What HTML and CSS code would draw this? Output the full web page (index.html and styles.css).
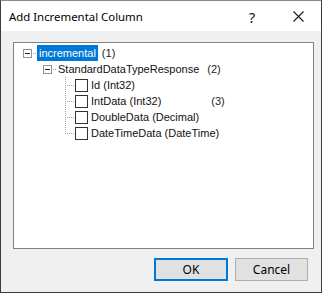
FILE: index.html
```html
<!DOCTYPE html>
<html>
<head>
<meta charset="utf-8">
<link rel="stylesheet" href="styles.css">
</head>
<body>
<div class="window">
  <div class="titlebar">
    <span class="title">Add Incremental Column</span>
    <span class="tbtn help">?</span>
    <span class="tbtn close"><svg width="11" height="11" viewBox="0 0 11 11"><path d="M0.5 0.5L10.5 10.5M10.5 0.5L0.5 10.5" stroke="#1a1a1a" stroke-width="1.1" fill="none"/></svg></span>
  </div>
  <div class="content">
    <div class="tree">
      <div class="row root">
        <span class="exp"></span><span class="hline w5"></span><span class="label sel">incremental</span><span class="note n1">(1)</span>
      </div>
      <div class="row lvl1">
        <span class="exp"></span><span class="hline w4"></span><span class="label">StandardDataTypeResponse</span><span class="note n2">(2)</span>
      </div>
      <div class="row leaf">
        <span class="branch"></span><span class="chk"></span><span class="label">Id (Int32)</span>
      </div>
      <div class="row leaf">
        <span class="branch"></span><span class="chk"></span><span class="label">IntData (Int32)</span><span class="note n3">(3)</span>
      </div>
      <div class="row leaf">
        <span class="branch"></span><span class="chk"></span><span class="label">DoubleData (Decimal)</span>
      </div>
      <div class="row leaf last">
        <span class="branch"></span><span class="chk"></span><span class="label">DateTimeData (DateTime)</span>
      </div>
    </div>
    <div class="buttons">
      <button class="btn ok">OK</button>
      <button class="btn">Cancel</button>
    </div>
  </div>
</div>
</body>
</html>
```
FILE: styles.css
```css
* { box-sizing: border-box; }
html, body { margin: 0; padding: 0; background: #ffffff; }
body { width: 324px; height: 296px; overflow: hidden; }

.window {
  width: 322px;
  height: 293px;
  border: 1px solid #3c3c3c;
  border-top-color: #8a8a8a;
  display: flex;
  flex-direction: column;
  background: #f0f0f0;
}

.titlebar {
  height: 30px;
  flex: none;
  background: #ffffff;
  display: flex;
  align-items: center;
  padding-left: 8px;
}
.title {
  flex: 1;
  font-family: "Noto Sans", "Open Sans", sans-serif;
  font-size: 11.4px;
  color: #000;
  padding-top: 1px;
}
.tbtn {
  width: 46px;
  height: 30px;
  display: flex;
  align-items: center;
  justify-content: center;
}
.help {
  font-family: "Noto Sans", sans-serif;
  font-size: 15px;
  color: #1a1a1a;
  padding-top: 1px;
}
.close { padding-top: 1px; }

.content {
  flex: 1;
  display: flex;
  flex-direction: column;
  padding: 11px 7px 11px 12px;
}

.tree {
  height: 207px;
  background: #ffffff;
  border: 1px solid #828282;
  padding-top: 2px;
  font-family: "Liberation Sans", Arial, sans-serif;
  font-size: 11px;
  color: #111;
}

.row {
  height: 16px;
  display: flex;
  align-items: center;
  white-space: nowrap;
}
.root { padding-left: 9px; }
.lvl1 { padding-left: 29px; }
.leaf { padding-left: 51px; align-items: stretch; }

.exp {
  width: 9px;
  height: 9px;
  flex: none;
  border: 1px solid #919191;
  background: linear-gradient(#222, #222) center / 5px 1px no-repeat, #ffffff;
}

.hline {
  height: 1px;
  flex: none;
  background: repeating-linear-gradient(to right, transparent 0 1px, #a0a0a0 1px 2px);
}
.w5 { width: 5px; }
.w4 { width: 4px; }

.branch {
  width: 10px;
  flex: none;
  background:
    repeating-linear-gradient(to bottom, #a0a0a0 0 1px, transparent 1px 2px) left top / 1px 100% no-repeat,
    repeating-linear-gradient(to right, #a0a0a0 0 1px, transparent 1px 2px) left 8px / 100% 1px no-repeat;
}
.last .branch {
  background:
    repeating-linear-gradient(to bottom, #a0a0a0 0 1px, transparent 1px 2px) left top / 1px 9px no-repeat,
    repeating-linear-gradient(to right, #a0a0a0 0 1px, transparent 1px 2px) left 8px / 100% 1px no-repeat;
}

.chk {
  width: 13px;
  height: 13px;
  flex: none;
  align-self: center;
  border: 1px solid #333333;
  background: #ffffff;
}
.leaf .label { align-self: center; margin-left: 1px; }

.label {
  padding: 1px 2px;
  line-height: 12px;
}
.sel {
  background: #0078d7;
  color: #ffffff;
  padding: 2px 2px 2px 2px;
}

.note {
  align-self: center;
  font-size: 11px;
  color: #222;
}
.n1 { margin-left: 4px; }
.n2 { margin-left: 6px; }
.n3 { margin-left: 48px; }

.buttons {
  margin-top: 9px;
  display: flex;
  justify-content: flex-end;
  gap: 7px;
  padding-right: 6px;
}
.btn {
  width: 73px;
  height: 23px;
  margin: 0;
  padding: 0;
  background: #e1e1e1;
  border: 1px solid #adadad;
  font-family: "Noto Sans", "Open Sans", sans-serif;
  font-size: 12px;
  color: #000;
}
.ok {
  width: 74px;
  border: 2px solid #0078d7;
}
```
